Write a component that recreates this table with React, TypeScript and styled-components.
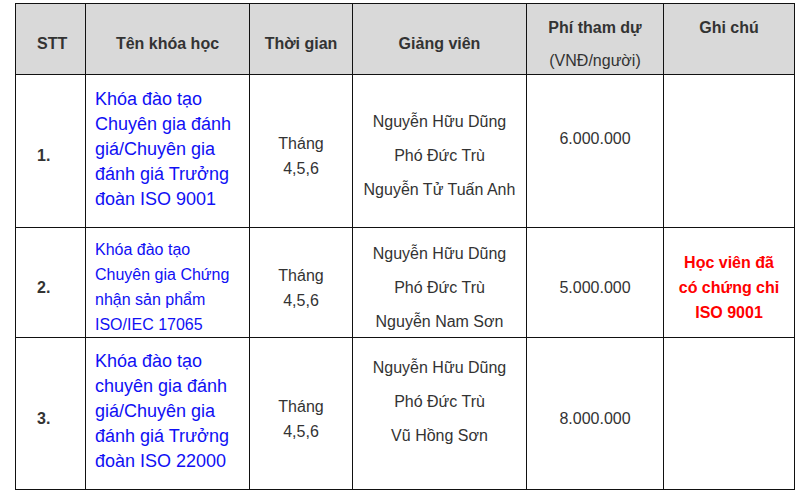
import React from "react";
import styled, { createGlobalStyle } from "styled-components";

const GlobalStyle = createGlobalStyle`
    body {
        margin: 0;
        background: #ffffff;
        font-family: "Liberation Sans", Arial, sans-serif;
    }
`;

type Course = {
    no: string;
    title: string[];
    small?: boolean;
    titleShift: number;
    lecturers: string[];
    lecturerShift: number;
    fee: string;
    feeShift: number;
    note?: string[];
    height: number;
};

const courses: Course[] = [
    {
        no: "1.",
        title: ["Khóa đào tạo", "Chuyên gia đánh", "giá/Chuyên gia", "đánh giá Trưởng", "đoàn ISO 9001"],
        titleShift: -2,
        lecturers: ["Nguyễn Hữu Dũng", "Phó Đức Trù", "Nguyễn Tử Tuấn Anh"],
        lecturerShift: 5,
        fee: "6.000.000",
        feeShift: -12,
        height: 153,
    },
    {
        no: "2.",
        title: ["Khóa đào tạo", "Chuyên gia Chứng", "nhận sản phẩm", "ISO/IEC 17065"],
        small: true,
        titleShift: 4.5,
        lecturers: ["Nguyễn Hữu Dũng", "Phó Đức Trù", "Nguyễn Nam Sơn"],
        lecturerShift: 5,
        fee: "5.000.000",
        feeShift: 5,
        note: ["Học viên đã", "có chứng chỉ", "ISO 9001"],
        height: 110,
    },
    {
        no: "3.",
        title: ["Khóa đào tạo", "chuyên gia đánh", "giá/Chuyên gia", "đánh giá Trưởng", "đoàn ISO 22000"],
        titleShift: -2,
        lecturers: ["Nguyễn Hữu Dũng", "Phó Đức Trù", "Vũ Hồng Sơn"],
        lecturerShift: -12,
        fee: "8.000.000",
        feeShift: 5,
        height: 152,
    },
];

// shift > 0 pushes the content down, < 0 pulls it up (cells are vertically centred)
const shiftPadding = (shift: number) =>
    shift >= 0 ? `padding-top: ${shift * 2}px;` : `padding-bottom: ${-shift * 2}px;`;

export default function App() {
    return (
        <>
            <GlobalStyle />
            <Page>
                <FeeTable>
                    <colgroup>
                        <col style={{ width: 70 }} />
                        <col style={{ width: 164 }} />
                        <col style={{ width: 103 }} />
                        <col style={{ width: 174 }} />
                        <col style={{ width: 137 }} />
                        <col style={{ width: 131 }} />
                    </colgroup>
                    <thead>
                        <Row $height={71}>
                            <HeadCell $align="left">STT</HeadCell>
                            <HeadCell>Tên khóa học</HeadCell>
                            <HeadCell>Thời gian</HeadCell>
                            <HeadCell>Giảng viên</HeadCell>
                            <HeadCell $shift={5.5}>
                                <Stack $gap={15.5}>
                                    <span>Phí tham dự</span>
                                    <SubLabel>(VNĐ/người)</SubLabel>
                                </Stack>
                            </HeadCell>
                            <HeadCell $shift={-11}>Ghi chú</HeadCell>
                        </Row>
                    </thead>
                    <tbody>
                        {courses.map((c) => (
                            <Row key={c.no} $height={c.height}>
                                <Cell $align="left">
                                    <Number>{c.no}</Number>
                                </Cell>
                                <Cell $align="left" $shift={c.titleShift}>
                                    <CourseLink href="#" $small={c.small}>
                                        {c.title.map((line, i) => (
                                            <React.Fragment key={i}>
                                                {i > 0 && <br />}
                                                {line}
                                            </React.Fragment>
                                        ))}
                                    </CourseLink>
                                </Cell>
                                <Cell>
                                    <Wrapped>
                                        Tháng
                                        <br />
                                        4,5,6
                                    </Wrapped>
                                </Cell>
                                <Cell $shift={c.lecturerShift}>
                                    <Stack $gap={16}>
                                        {c.lecturers.map((name) => (
                                            <span key={name}>{name}</span>
                                        ))}
                                    </Stack>
                                </Cell>
                                <Cell $shift={c.feeShift}>{c.fee}</Cell>
                                <Cell>
                                    {c.note && (
                                        <Note>
                                            {c.note.map((line, i) => (
                                                <React.Fragment key={i}>
                                                    {i > 0 && <br />}
                                                    {line}
                                                </React.Fragment>
                                            ))}
                                        </Note>
                                    )}
                                </Cell>
                            </Row>
                        ))}
                    </tbody>
                </FeeTable>
            </Page>
        </>
    );
}

const Page = styled.div`
    padding: 3px 0 0 15px;
`;

const FeeTable = styled.table`
    width: 780px;
    border-collapse: collapse;
    table-layout: fixed;
    color: #333333;
    font-size: 16px;
`;

const Row = styled.tr<{ $height: number }>`
    height: ${(p) => p.$height}px;
`;

const HeadCell = styled.th<{ $align?: string; $shift?: number }>`
    background: #d9d9d9;
    border: 1px solid #111111;
    font-weight: bold;
    line-height: 18px;
    vertical-align: middle;
    text-align: ${(p) => p.$align ?? "center"};
    padding: 0 0 0 ${(p) => (p.$align === "left" ? "21px" : "0")};
    ${(p) => shiftPadding(p.$shift ?? 5)}
`;

const Cell = styled.td<{ $align?: string; $shift?: number }>`
    border: 1px solid #111111;
    line-height: 18px;
    vertical-align: middle;
    text-align: ${(p) => p.$align ?? "center"};
    padding: 0 0 0 ${(p) => (p.$align === "left" ? "9px" : "0")};
    ${(p) => shiftPadding(p.$shift ?? 5)}

    &:first-child {
        padding-left: 21px;
    }
`;

const Stack = styled.div<{ $gap: number }>`
    display: flex;
    flex-direction: column;
    align-items: center;
    gap: ${(p) => p.$gap}px;
    white-space: nowrap;
`;

const SubLabel = styled.span`
    font-weight: normal;
`;

const Number = styled.span`
    font-weight: bold;
`;

const CourseLink = styled.a<{ $small?: boolean }>`
    display: block;
    color: #1010f4;
    text-decoration: none;
    font-size: ${(p) => (p.$small ? "16px" : "18px")};
    line-height: 25px;
    white-space: nowrap;
`;

const Wrapped = styled.div`
    line-height: 25px;
`;

const Note = styled.div`
    color: #ff0000;
    font-weight: bold;
    line-height: 25px;
`;
